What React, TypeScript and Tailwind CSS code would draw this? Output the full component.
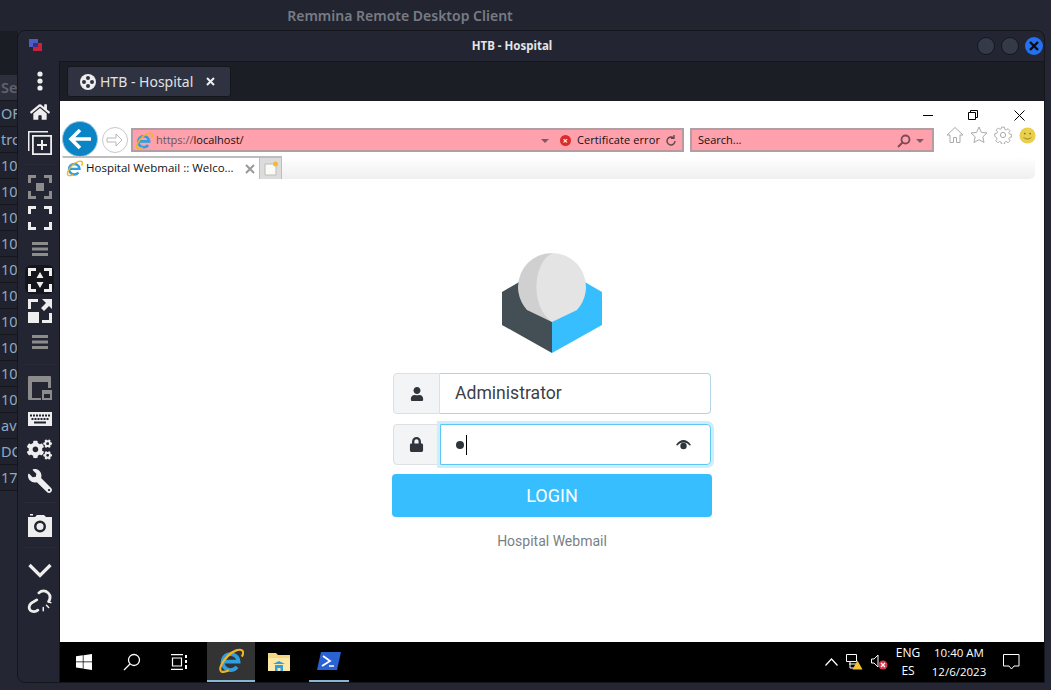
import React from "react";
import { FaUser, FaLock, FaHome, FaCogs, FaWrench } from "react-icons/fa";

const rows = ["Se", "OF", "tro", "10", "10", "10", "10", "10", "10", "10", "10", "10", "10", "av", "DC", "17-"];

function IeLogo({ size = 18 }: { size?: number }) {
  return (
    <svg width={size} height={size} viewBox="0 0 24 24" className="shrink-0">
      <path d="M5 12.500h14A7.400 7.400 0 1 0 17.500 17.500" fill="none" stroke="#2f9fe0" strokeWidth="3.400" />
      <path d="M3 21.500C.5 19.500 3.500 13 9 7.500S20 .5 22.500 2.500c1.300 1.200.8 3.300-.5 5.500" fill="none" stroke="#f0b429" strokeWidth="2" />
      <path d="M3 21.500c1.500 1.200 4 .5 7-1" fill="none" stroke="#f0b429" strokeWidth="2" />
    </svg>
  );
}

function Icon({ children, cls = "text-[#eeeeee]" }: { children: React.ReactNode; cls?: string }) {
  return (
    <svg width="24" height="24" viewBox="0 0 24 24" fill="currentColor" className={cls}>
      {children}
    </svg>
  );
}

function SideItem({ children, active }: { children: React.ReactNode; active?: boolean }) {
  return (
    <div className="h-[31px] flex items-center justify-center">
      <div className={active ? "w-[29px] h-[29px] rounded-md bg-[#14161c] flex items-center justify-center" : "flex items-center justify-center"}>
        {children}
      </div>
    </div>
  );
}

function Sep({ h }: { h: string }) {
  return (
    <div className={`${h} flex items-center justify-center`}>
      <div className="w-[30px] h-px bg-[#2a2d38]" />
    </div>
  );
}

const corners = "M0 0h8v3H3v5H0zM16 0h8v8h-3V3h-5zM0 16h3v5h5v3H0zM21 16h3v8h-8v-3h5z";

function Hamburger() {
  return (
    <Icon cls="text-[#8c8c8c]">
      <path d="M4 5h16v3H4zM4 10.500h16v3H4zM4 16h16v3H4z" />
    </Icon>
  );
}

function Sidebar() {
  return (
    <div className="w-[42px] shrink-0 flex flex-col pt-[4px] pl-[2px] border-r border-[#14161c]">
      <SideItem>
        <Icon>
          <circle cx="12" cy="5" r="2.600" />
          <circle cx="12" cy="12" r="2.600" />
          <circle cx="12" cy="19" r="2.600" />
        </Icon>
      </SideItem>
      <SideItem>
        <FaHome size={20} className="text-[#eeeeee]" />
      </SideItem>
      <SideItem>
        <Icon>
          <path d="M0 0h20v1.500H1.500V20H0z" />
          <path fillRule="evenodd" d="M4 4h20v20H4zM5.800 5.800v16.400h16.400V5.800z" />
          <path d="M13 9h2v4h4v2h-4v4h-2v-4H9v-2h4z" />
        </Icon>
      </SideItem>
      <Sep h="h-[13px]" />
      <SideItem>
        <Icon cls="text-[#8c8c8c]">
          <path d={corners} />
          <rect x="8" y="8" width="8" height="8" />
        </Icon>
      </SideItem>
      <SideItem>
        <Icon>
          <path d={corners} />
        </Icon>
      </SideItem>
      <SideItem>
        <Hamburger />
      </SideItem>
      <SideItem active>
        <Icon>
          <path d={corners} />
          <path d="M12 4l3.500 6h-7zM12 20l-3.500-6h7z" />
        </Icon>
      </SideItem>
      <SideItem>
        <Icon>
          <path d="M0 0h10v3H3v7H0zM0 13h11v11H0zM21 14h3v10H14v-3h7z" />
          <path d="M14 0h10v10l-3-3-5 5-3-3 5-5z" />
        </Icon>
      </SideItem>
      <SideItem>
        <Hamburger />
      </SideItem>
      <Sep h="h-[15px]" />
      <SideItem>
        <Icon cls="text-[#8c8c8c]">
          <path fillRule="evenodd" d="M1 0h21a1 1 0 0 1 1 1v11h-3V6H4v16h9v2H1a1 1 0 0 1-1-1V1a1 1 0 0 1 1-1z" />
          <path fillRule="evenodd" d="M14 14h10v10H14zM16 18v4h6v-4z" />
        </Icon>
      </SideItem>
      <SideItem>
        <Icon>
          <path
            fillRule="evenodd"
            d="M0 5h24v14H0zM2 7.500v2h2v-2zM5 7.500v2h2v-2zM8 7.500v2h2v-2zM11 7.500v2h2v-2zM14 7.500v2h2v-2zM17 7.500v2h2v-2zM20 7.500v2h2v-2zM3.500 11v2h2v-2zM6.500 11v2h2v-2zM9.500 11v2h2v-2zM12.500 11v2h2v-2zM15.500 11v2h2v-2zM18.500 11v2h2v-2zM6 14.500v2h12v-2z"
          />
        </Icon>
      </SideItem>
      <SideItem>
        <FaCogs size={25} className="text-[#eeeeee]" />
      </SideItem>
      <SideItem>
        <FaWrench size={24} className="text-[#eeeeee] -scale-x-100" />
      </SideItem>
      <Sep h="h-[13px]" />
      <SideItem>
        <Icon>
          <path fillRule="evenodd" d="M0 4h7l2-2h7l2 2h6v20H0zM12 7.500a6 6 0 1 0 0 12 6 6 0 0 0 0-12z" />
          <rect x="2" y="1" width="3" height="1.500" />
          <circle cx="12" cy="13.500" r="3.500" />
        </Icon>
      </SideItem>
      <Sep h="h-[14px]" />
      <SideItem>
        <svg width="26" height="26" viewBox="0 0 26 26" fill="none" stroke="#eeeeee" strokeWidth="3.200">
          <path d="M2.500 8l10.500 10.500L23.500 8" />
        </svg>
      </SideItem>
      <SideItem>
        <svg width="26" height="26" viewBox="0 0 24 24" fill="none" stroke="#eeeeee" strokeWidth="2.600" strokeLinecap="round">
          <path d="M11 4.500c2.500-2.500 6-2.500 8.500 0 2.500 2.500 2 5.500.5 8" />
          <path d="M9 11l-5 3c-2.500 2-2.500 5-1 6.500 2 1.800 5 1.500 7 0" />
          <path d="M15 18v3M18 16l2 2M20 13l2 .5" strokeWidth="1.400" />
        </svg>
      </SideItem>
    </div>
  );
}

function Toolbar() {
  return (
    <div className="h-[34px] flex items-start pt-[6px] pl-[2px] pr-[10px] shrink-0 font-['Open_Sans',sans-serif] text-[11px] text-[#111]">
      <div className="w-[36px] h-[36px] -mt-[7px] rounded-full bg-[#0a84c4] border border-[#9fc8de] flex items-center justify-center shrink-0">
        <svg width="24" height="22" viewBox="0 0 24 22" fill="none" stroke="#fff" strokeWidth="3.600">
          <path d="M23 11H4M12 2l-9 9 9 9" />
        </svg>
      </div>
      <div className="w-[26px] h-[26px] -mt-[1px] ml-[4px] rounded-full border border-[#c8c8c8] flex items-center justify-center shrink-0">
        <svg width="18" height="16" viewBox="0 0 18 16" fill="none" stroke="#b8b8b8" strokeWidth="1">
          <path d="M1 6h9V2l6 6-6 6v-4H1z" />
        </svg>
      </div>
      <div className="w-[553px] h-[24px] ml-[3px] bg-[#ffa1ad] border-2 border-[#b49ca3] flex items-center pl-[2px] pt-px shrink-0">
        <IeLogo size={18} />
        <span className="ml-[3px] text-[#66565a]">https://</span>
        <span>localhost/</span>
        <span className="flex-1" />
        <span className="w-0 h-0 border-x-[4px] border-x-transparent border-t-[4px] border-t-[#7b5b62]" />
        <span className="ml-[11px] w-[11px] h-[11px] rounded-full bg-[#d92c2c] text-white flex items-center justify-center text-[9px] leading-none font-bold">×</span>
        <span className="ml-[6px] tracking-[0.1px]">Certificate error</span>
        <svg width="12" height="12" viewBox="0 0 12 12" fill="none" stroke="#5a4a4e" strokeWidth="1.400" className="ml-[5px] mr-[5px]">
          <path d="M10 6a4 4 0 1 1-1.300-3M9 0v3.300H5.800" />
        </svg>
      </div>
      <div className="w-[244px] h-[24px] ml-[6px] bg-[#ffa1ad] border-2 border-[#b49ca3] flex items-center pl-[6px] pr-[8px] pt-px shrink-0">
        <span>Search...</span>
        <span className="flex-1" />
        <svg width="14" height="14" viewBox="0 0 14 14" fill="none" stroke="#7b4b55" strokeWidth="1.800">
          <circle cx="8.500" cy="5.500" r="4" />
          <path d="M5.500 8.500L1 13" />
        </svg>
        <span className="ml-[5px] w-0 h-0 border-x-[4px] border-x-transparent border-t-[4px] border-t-[#7b5b62]" />
      </div>
      <div className="flex items-center gap-[6px] ml-[12px] -mt-[2px] shrink-0">
        <svg width="18" height="18" viewBox="0 0 18 18" fill="none" stroke="#aaaaaa">
          <path d="M1 9l8-7.500L17 9h-3v7.500h-3.500v-5h-3v5H4V9z" />
        </svg>
        <svg width="18" height="18" viewBox="0 0 18 18" fill="none" stroke="#aaaaaa">
          <path d="M9 1l2.400 5.400 5.600.6-4.200 3.800 1.200 5.700L9 13.700l-5 2.800 1.200-5.700L1 7l5.600-.6z" />
        </svg>
        <svg width="18" height="18" viewBox="0 0 18 18" fill="none" stroke="#aaaaaa">
          <circle cx="9" cy="9" r="2.600" />
          <path d="M7.500 1h3l.4 2.200 1.600.7 1.900-1.300 2 2-1.300 1.900.7 1.600 2.200.4v2.800l-2.200.4-.7 1.600 1.300 1.900-2 2-1.900-1.300-1.600.7-.4 2.200h-3l-.4-2.200-1.600-.7-1.900 1.300-2-2 1.300-1.900-.7-1.600L.5 10.600V7.800l2.200-.4.7-1.600-1.300-1.900 2-2 1.900 1.300 1.600-.7z" transform="translate(.3 .2) scale(.96)" />
        </svg>
        <svg width="17" height="17" viewBox="0 0 18 18" className="ml-[1px]">
          <circle cx="9" cy="9" r="8.500" fill="#e9cf4e" />
          <circle cx="6.200" cy="7" r="1" fill="#8a7420" />
          <circle cx="11.800" cy="7" r="1" fill="#8a7420" />
          <path d="M5 11c1.500 2.200 6.500 2.200 8 0" fill="none" stroke="#8a7420" strokeWidth="1" />
        </svg>
      </div>
    </div>
  );
}

function TabStrip() {
  return (
    <div className="relative z-10 h-[23px] flex pl-[2px] pr-[9px] shrink-0">
      <div className="w-[198px] bg-white border-t-2 border-x border-[#bdbdbd] border-l-transparent flex items-center pl-[3px] pr-[4px] font-['Open_Sans',sans-serif] text-[11.500px] text-[#111]">
        <IeLogo size={17} />
        <span className="ml-[3px] -mt-px whitespace-nowrap">Hospital Webmail :: Welco...</span>
        <span className="flex-1" />
        <svg width="10" height="10" viewBox="0 0 10 10" stroke="#999" strokeWidth="2">
          <path d="M1 1l8 8M9 1l-8 8" />
        </svg>
      </div>
      <div className="w-[22px] bg-[#dcdcdc] border-t-2 border-r border-[#bdbdbd] flex items-center justify-center">
        <svg width="16" height="16" viewBox="0 0 16 16">
          <path d="M2 3h9l2 2v9H2z" fill="#fbfbf6" stroke="#bbb" />
          <circle cx="12.500" cy="3" r="2.500" fill="#f5b83a" />
        </svg>
      </div>
      <div className="flex-1 mt-[1px] bg-gradient-to-b from-white to-[#efeff1] rounded-br-md" />
    </div>
  );
}

function Login() {
  return (
    <div className="flex-1 bg-white pt-[74px] flex flex-col items-center font-['Roboto',sans-serif]">
      <svg width="100" height="100" viewBox="0 0 100 100" className="shrink-0">
        <path d="M0 39L50 10v90L0 72z" fill="#434f54" />
        <path d="M100 39L50 10v90l50-28z" fill="#37beff" />
        <path d="M50 0a34 34 0 0 0-25 57l25 12z" fill="#d0d0d0" />
        <path d="M50 0A34 34 0 0 1 75 57L50 69C38 60 34 45 34.500 32 35 18 40 6 50 0z" fill="#e4e4e4" />
      </svg>
      <div className="w-[320px] mt-[20px] flex flex-col items-center">
        <div className="w-[318px] h-[41px] flex">
          <div className="w-[47px] bg-[#f3f4f6] border border-[#dcdfe3] rounded-l-[4px] flex items-center justify-center shrink-0">
            <FaUser size={14} className="text-[#2f353b]" />
          </div>
          <div className="flex-1 border border-l-0 border-[#b5d3e6] rounded-r-[4px] flex items-center pl-[15px] text-[17.600px] text-[#3b4046]">
            Administrator
          </div>
        </div>
        <div className="w-[318px] h-[41px] mt-[10px] flex">
          <div className="w-[47px] bg-[#f3f4f6] border border-[#dcdfe3] rounded-l-[4px] flex items-center justify-center shrink-0">
            <FaLock size={15} className="text-[#2f353b]" />
          </div>
          <div className="flex-1 border border-[#5cc6f5] rounded-r-[4px] shadow-[0_0_0_3px_#cdeefc] flex items-center pl-[15px] pr-[19px]">
            <span className="w-[8px] h-[8px] rounded-full bg-[#2f353b]" />
            <span className="w-px h-[20px] bg-black ml-[2px]" />
            <span className="flex-1" />
            <svg width="15" height="10" viewBox="0 0 15 10" fill="#2f353b">
              <path d="M0 5C2 1.500 5 0 7.500 0S13 1.500 15 5l-1.500.6C12 3.500 10 2.500 7.500 2.500S3 3.500 1.500 5.600z" />
              <circle cx="7.500" cy="6" r="3.200" />
            </svg>
          </div>
        </div>
        <div className="w-[320px] h-[43px] mt-[9px] rounded-[4px] bg-[#37beff] text-white text-[18px] flex items-center justify-center">
          LOGIN
        </div>
        <div className="mt-[14px] text-[14px] leading-[20px] text-[#7a7f85]">Hospital Webmail</div>
      </div>
    </div>
  );
}

function Taskbar() {
  return (
    <div className="h-[40px] bg-black flex items-stretch shrink-0 text-white font-['Open_Sans',sans-serif] text-[11.500px]">
      <div className="w-[48px] flex items-center justify-center">
        <svg width="16" height="16" viewBox="0 0 16 16" fill="#fff">
          <path d="M0 2.300l6.800-1v6.200H0zM7.500 1.200L16 0v7.500H7.500zM0 8.200h6.800v6.300L0 13.600zM7.500 8.200H16V16l-8.500-1.200z" />
        </svg>
      </div>
      <div className="w-[48px] flex items-center justify-center">
        <svg width="18" height="18" viewBox="0 0 18 18" fill="none" stroke="#fff" strokeWidth="1.300">
          <circle cx="11" cy="7" r="5.500" />
          <path d="M7 11l-6 6" />
        </svg>
      </div>
      <div className="w-[48px] flex items-center justify-center">
        <svg width="18" height="16" viewBox="0 0 18 16" fill="none" stroke="#fff" strokeWidth="1.200">
          <path d="M0 .6h12M1.500 4h9v8h-9zM0 15.400h12" />
          <path d="M15 1v3M15 6v3M15 11v4" strokeWidth="2" />
        </svg>
      </div>
      <div className="w-[48px] ml-[3px] bg-[#333333] border-b-[2px] border-[#8ab4d4] flex items-center justify-center">
        <IeLogo size={26} />
      </div>
      <div className="w-[48px] flex items-center justify-center">
        <svg width="22" height="20" viewBox="0 0 22 20">
          <path d="M0 1h8l2 2h12v16H0z" fill="#f6d77f" />
          <path d="M0 6h22v13H0z" fill="#fbe7a6" />
          <path d="M7 19v-6h8v6h-2.500v-3h-3v3zM5 12l6-3 6 3z" fill="#2f9fe0" />
        </svg>
      </div>
      <div className="w-[40px] mx-[6px] border-b-[2px] border-[#8ab4d4] flex items-center justify-center">
        <svg width="24" height="20" viewBox="0 0 24 20">
          <path d="M4 1h20l-4 18H0z" fill="#2a62d4" />
          <path d="M6 5l7 5-8 5" fill="none" stroke="#fff" strokeWidth="1.800" />
          <path d="M12 15h5" stroke="#fff" strokeWidth="1.500" />
        </svg>
      </div>
      <div className="flex-1" />
      <div className="flex items-center gap-[8px] mr-[4px]">
        <svg width="13" height="8" viewBox="0 0 13 8" fill="none" stroke="#fff" strokeWidth="1.200">
          <path d="M.5 7.500l6-6.500 6 6.500" />
        </svg>
        <svg width="17" height="16" viewBox="0 0 17 16" fill="none" stroke="#fff">
          <path d="M.5.5h10v7h-10zM3 10h8M4 7.500V14h6" />
          <path d="M11.500 6.500l5 9h-10z" fill="#f1c232" stroke="none" />
        </svg>
        <svg width="17" height="16" viewBox="0 0 17 16" fill="none" stroke="#fff">
          <path d="M.5 5h2.500L7 1v12L3 9H.5z" />
          <circle cx="12" cy="11" r="4.500" fill="#d3384a" stroke="none" />
          <path d="M10 9l4 4M14 9l-4 4" strokeWidth="1.200" />
        </svg>
      </div>
      <div className="w-[32px] flex flex-col items-center justify-center leading-[18px] text-[12px]">
        <span>ENG</span>
        <span>ES</span>
      </div>
      <div className="w-[60px] ml-[5px] flex flex-col items-center justify-center leading-[19px]">
        <span className="whitespace-nowrap">10:40 AM</span>
        <span className="whitespace-nowrap">12/6/2023</span>
      </div>
      <div className="w-[44px] mr-[11px] flex items-center justify-center">
        <svg width="17" height="16" viewBox="0 0 17 16" fill="none" stroke="#fff">
          <path d="M.5.5h15.500v11.500h-5L8.500 15 6 12H.5z" />
        </svg>
      </div>
    </div>
  );
}

export default function App() {
  return (
    <div className="relative w-[1051px] h-[690px] overflow-hidden bg-[#242733]">
      <div className="h-[31px] bg-[#222530] flex items-center justify-center w-[800px] font-['Noto_Sans',sans-serif] font-semibold text-[14px] text-[#787b84]">
        Remmina Remote Desktop Client
      </div>
      <div className="h-[44px] w-[18px] bg-[#1b1d25]" />
      <div className="w-[18px] font-['Noto_Sans',sans-serif] text-[14.500px] overflow-hidden">
        {rows.map((r, i) => (
          <div key={i} className={`h-[26px] leading-[25px] pl-[1px] whitespace-nowrap border-b border-[#14161c] ${i === 0 ? "bg-[#2d303c] text-[#5f636e] font-semibold" : "bg-[#20232e] text-[#8fa9c4]"}`}>
            {r}
          </div>
        ))}
      </div>
      {/* window on the desktop */}
      <div className="absolute left-[17px] top-[30px] w-[1028px] h-[653px] rounded-t-lg rounded-bl-lg border border-[#14161c] bg-[#232632] flex flex-col">
        <div className="h-[30px] flex items-center shrink-0 relative">
          <svg width="16" height="16" viewBox="0 0 16 16" className="ml-[10px]">
            <rect x="1" y="1" width="9" height="8" fill="#4d5bc5" />
            <rect x="5" y="5" width="9" height="8" fill="#c4243e" />
            <rect x="5" y="5" width="5" height="4" fill="#3a2f7a" />
          </svg>
          <div className="flex-1 text-center pl-[3px] font-['Noto_Sans',sans-serif] font-bold text-[11.500px] text-[#e4e5e8]">HTB - Hospital</div>
          <div className="flex items-center gap-[6px] mr-px">
            <span className="w-[18px] h-[18px] rounded-full bg-[#353a48] border border-[#14161c]" />
            <span className="w-[18px] h-[18px] rounded-full bg-[#353a48] border border-[#14161c]" />
            <span className="w-[18px] h-[18px] rounded-full bg-[#2470f0] flex items-center justify-center">
              <svg width="10" height="10" viewBox="0 0 10 10" stroke="#0c0c0c" strokeWidth="2.400">
                <path d="M1 1l8 8M9 1L1 9" />
              </svg>
            </span>
          </div>
        </div>
        <div className="flex-1 flex min-h-0">
          <Sidebar />
          <div className="flex-1 flex flex-col min-w-0">
            <div className="h-[40px] bg-[#1c1e26] border-t border-[#14161c] pl-[7px] flex items-center shrink-0">
              <div className="w-[164px] h-[31px] bg-[#2f3341] rounded-[3px] border border-[#15171d] flex items-center pl-[12px] font-['Noto_Sans',sans-serif] text-[14px] text-[#e0e1e4]">
                <svg width="16" height="16" viewBox="0 0 16 16" className="shrink-0">
                  <circle cx="8" cy="8" r="8" fill="#eeeeee" />
                  <circle cx="8" cy="4" r="2" fill="#2f3341" />
                  <circle cx="8" cy="12" r="2" fill="#2f3341" />
                  <circle cx="4" cy="8" r="2" fill="#2f3341" />
                  <circle cx="12" cy="8" r="2" fill="#2f3341" />
                </svg>
                <span className="ml-[4px] whitespace-nowrap">HTB - Hospital</span>
                <svg width="9" height="9" viewBox="0 0 9 9" stroke="#eeeeee" strokeWidth="2" className="ml-[13px] shrink-0">
                  <path d="M1 1l7 7M8 1L1 8" />
                </svg>
              </div>
            </div>
            <div className="flex-1 bg-white flex flex-col min-h-0">
              <div className="h-[21px] flex items-center justify-end pr-[19px] pt-[7px] shrink-0">
                <span className="w-[10px] h-px bg-black" />
                <svg width="10" height="10" viewBox="0 0 10 10" fill="none" stroke="#000" className="ml-[35px]">
                  <path d="M.5 2.500h7v7h-7zM2.500 2.500v-2h7v7h-2" />
                </svg>
                <svg width="11" height="11" viewBox="0 0 11 11" stroke="#000" className="ml-[36px]">
                  <path d="M.5.500l10 10M10.500.500l-10 10" />
                </svg>
              </div>
              <Toolbar />
              <TabStrip />
              <Login />
              <Taskbar />
            </div>
          </div>
        </div>
      </div>
    </div>
  );
}
